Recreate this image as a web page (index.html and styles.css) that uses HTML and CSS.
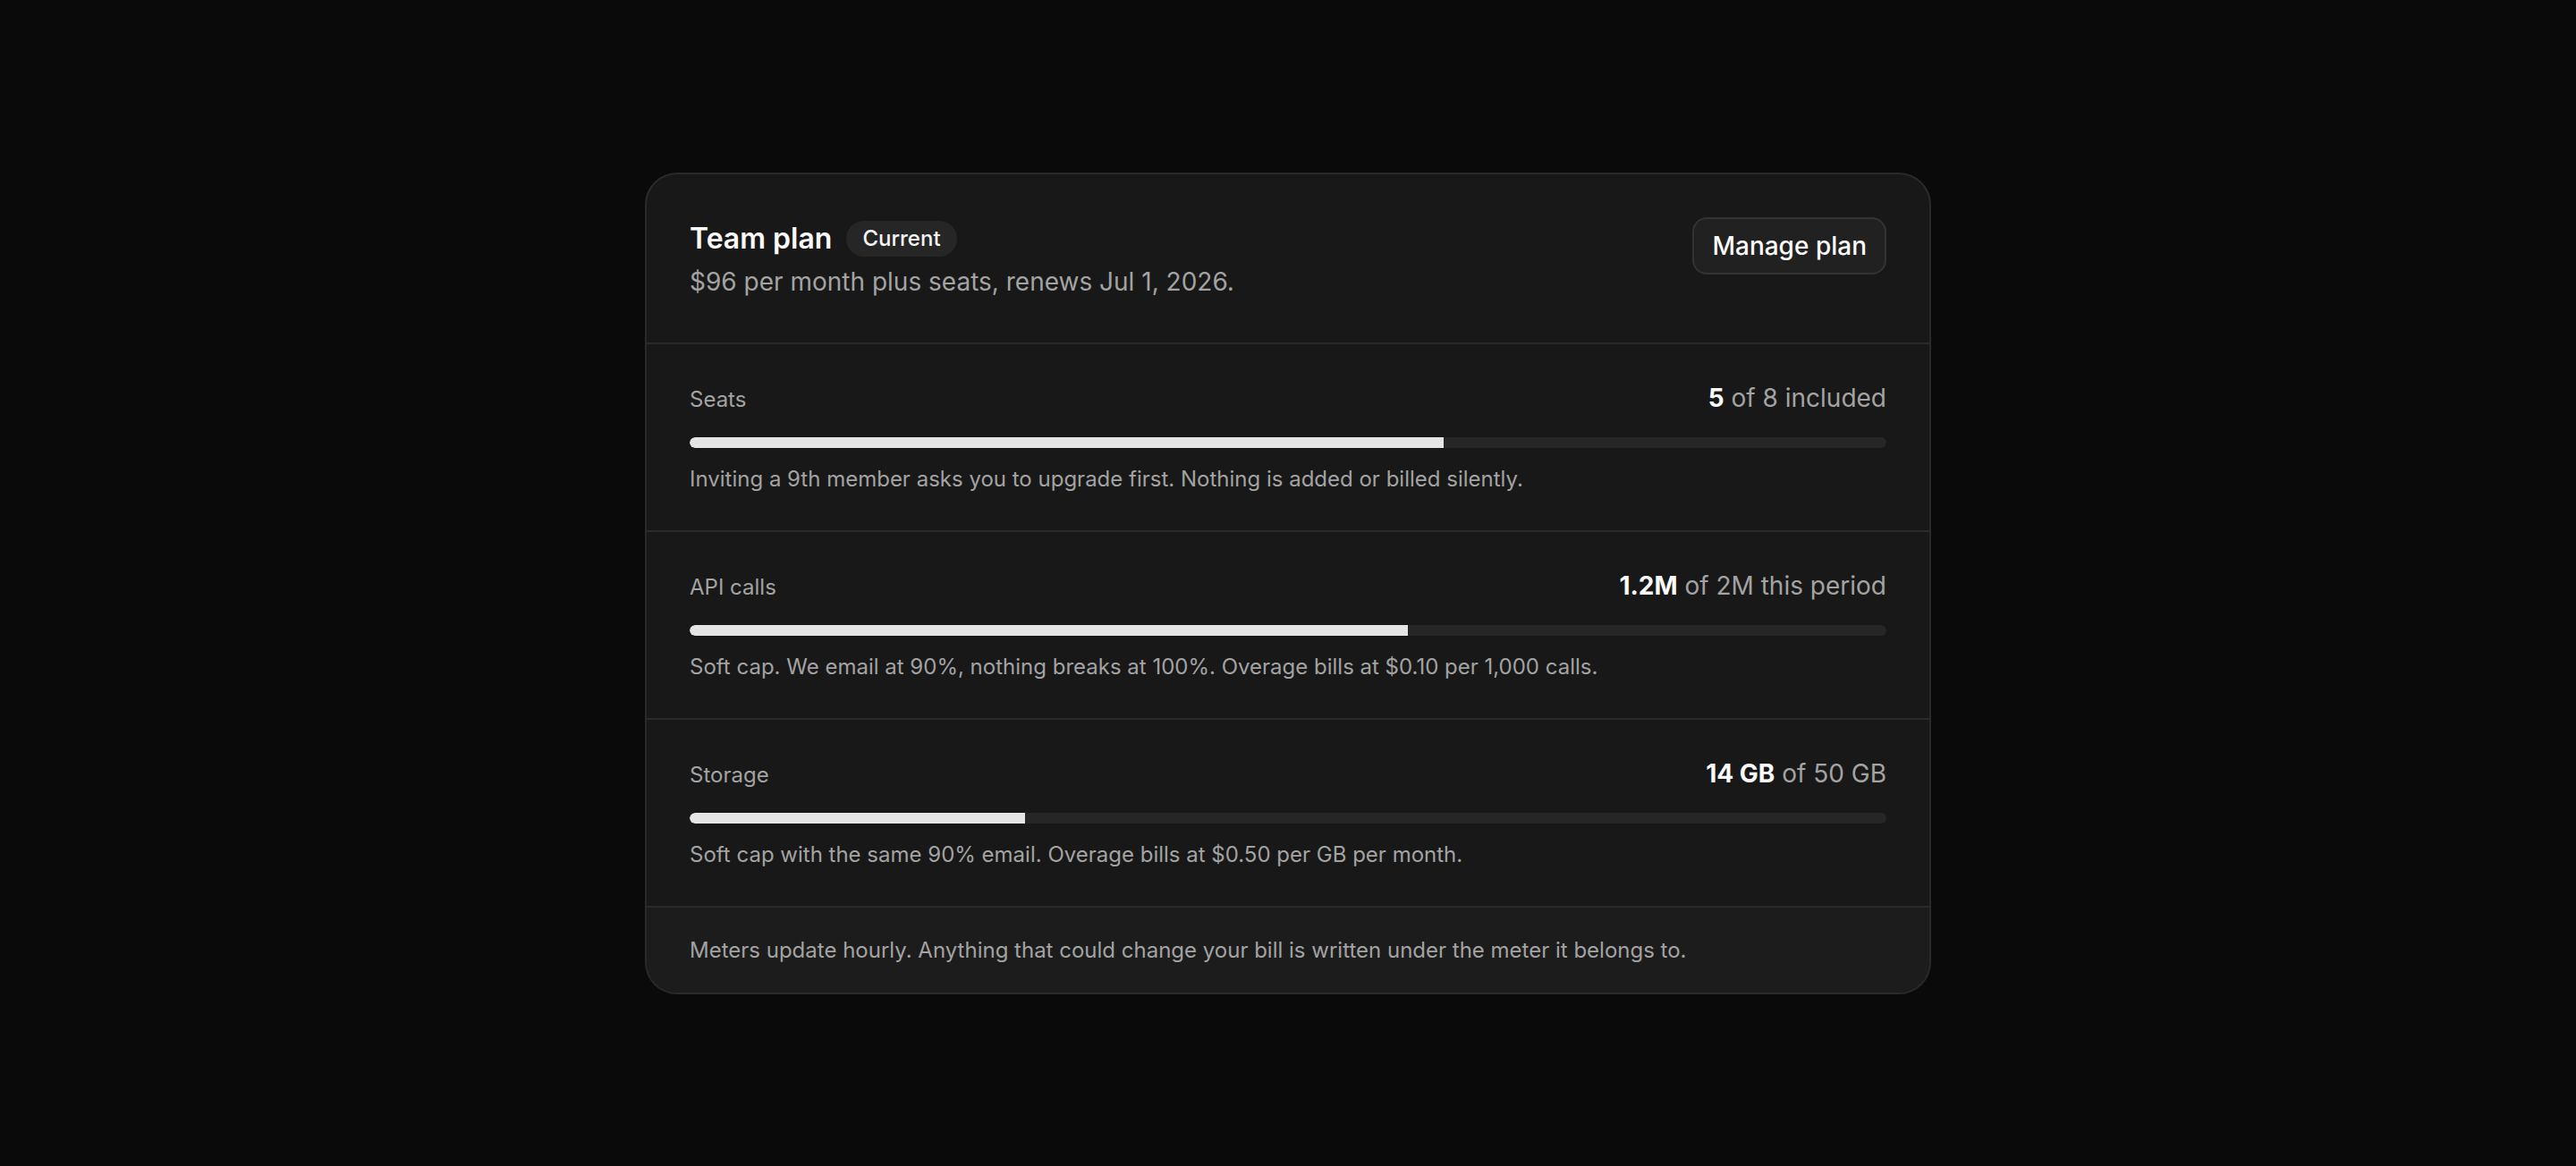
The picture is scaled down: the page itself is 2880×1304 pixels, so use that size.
FILE: index.html
```html
<!DOCTYPE html>
<html lang="en">
<head>
<meta charset="utf-8">
<title>Team plan</title>
<link rel="stylesheet" href="styles.css">
</head>
<body>
<main class="page">
  <section class="card">
    <header class="plan">
      <div class="plan-info">
        <div class="plan-title-row">
          <h1 class="plan-title">Team plan</h1>
          <span class="badge">Current</span>
        </div>
        <p class="plan-sub">$96 per month plus seats, renews Jul 1, 2026.</p>
      </div>
      <button class="btn">Manage plan</button>
    </header>

    <div class="meter">
      <div class="meter-head">
        <span class="meter-label">Seats</span>
        <span class="meter-value"><strong>5</strong> of 8 included</span>
      </div>
      <div class="track"><div class="fill" style="width:63%"></div></div>
      <p class="meter-note">Inviting a 9th member asks you to upgrade first. Nothing is added or billed silently.</p>
    </div>

    <div class="meter">
      <div class="meter-head">
        <span class="meter-label">API calls</span>
        <span class="meter-value"><strong>1.2M</strong> of 2M this period</span>
      </div>
      <div class="track"><div class="fill" style="width:60%"></div></div>
      <p class="meter-note">Soft cap. We email at 90%, nothing breaks at 100%. Overage bills at $0.10 per 1,000 calls.</p>
    </div>

    <div class="meter">
      <div class="meter-head">
        <span class="meter-label">Storage</span>
        <span class="meter-value"><strong>14 GB</strong> of 50 GB</span>
      </div>
      <div class="track"><div class="fill" style="width:28%"></div></div>
      <p class="meter-note">Soft cap with the same 90% email. Overage bills at $0.50 per GB per month.</p>
    </div>

    <footer class="foot">
      Meters update hourly. Anything that could change your bill is written under the meter it belongs to.
    </footer>
  </section>
</main>
</body>
</html>
```

FILE: styles.css
```css
* { box-sizing: border-box; }

html, body {
  margin: 0;
  padding: 0;
  background: #0a0a0a;
  font-family: Inter, "Noto Sans", "Liberation Sans", sans-serif;
  color: #f5f5f5;
}

.page {
  min-height: 1304px;
  display: flex;
  align-items: center;
  justify-content: center;
}

.card {
  width: 1438px;
  background: #181818;
  border: 2px solid #2a2a2a;
  border-radius: 36px;
  overflow: hidden;
}

.plan {
  display: flex;
  justify-content: space-between;
  align-items: flex-start;
  padding: 48px;
  border-bottom: 2px solid #2a2a2a;
}

.plan-info {
  display: flex;
  flex-direction: column;
  gap: 4px;
}

.plan-title-row {
  display: flex;
  align-items: center;
  gap: 16px;
  height: 48px;
}

.plan-title {
  margin: 0;
  font-size: 32px;
  font-weight: 600;
  line-height: 48px;
  color: #fafafa;
}

.badge {
  display: inline-flex;
  align-items: center;
  height: 40px;
  padding: 0 18px;
  border-radius: 20px;
  background: #262626;
  font-size: 24px;
  font-weight: 500;
  color: #f5f5f5;
}

.plan-sub {
  margin: 0;
  font-size: 28px;
  line-height: 40px;
  color: #a3a3a3;
}

.btn {
  height: 64px;
  padding: 0 20px;
  border: 2px solid #333333;
  border-radius: 16px;
  background: #212121;
  color: #fafafa;
  font-family: inherit;
  font-size: 28px;
  font-weight: 500;
}

.meter {
  padding: 40px 48px;
  border-bottom: 2px solid #2a2a2a;
}

.meter-head {
  display: flex;
  justify-content: space-between;
  align-items: baseline;
  height: 40px;
}

.meter-label {
  font-size: 24px;
  line-height: 36px;
  color: #a3a3a3;
}

.meter-value {
  font-size: 28px;
  line-height: 40px;
  color: #a3a3a3;
}

.meter-value strong {
  font-weight: 700;
  color: #fafafa;
}

.track {
  margin-top: 24px;
  height: 12px;
  border-radius: 6px;
  background: #262626;
  overflow: hidden;
}

.fill {
  height: 100%;
  background: #e5e5e5;
  border-radius: 6px 0 0 6px;
}

.meter-note {
  margin: 18px 0 0;
  font-size: 24px;
  line-height: 34px;
  color: #a3a3a3;
}

.foot {
  padding: 28px 48px;
  background: #1c1c1c;
  font-size: 24px;
  line-height: 39px;
  color: #a3a3a3;
}
```
